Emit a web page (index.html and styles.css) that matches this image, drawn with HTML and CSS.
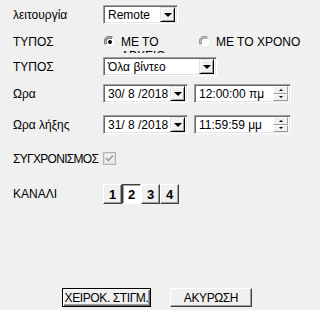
FILE: index.html
```html
<!DOCTYPE html>
<html>
<head>
<meta charset="utf-8">
<link rel="stylesheet" href="styles.css">
</head>
<body>
<div class="dlg">
  <div class="row r1">
    <div class="lbl">λειτουργία</div>
    <div class="field combo c-remote"><span class="val">Remote</span><span class="dd"><i class="tri"></i></span></div>
  </div>
  <div class="row r2">
    <div class="lbl">ΤΥΠΟΣ</div>
    <div class="radios">
      <div class="radio on"><svg width="12" height="12" viewBox="0 0 12 12"><circle cx="6" cy="6" r="5.5" fill="#fff" stroke="#e3e3e3"/><path d="M1.5 8.5 A5 5 0 0 1 8.5 1.5" fill="none" stroke="#7a7a7a" stroke-width="1.2"/><path d="M2.5 8 A4 4 0 0 1 8 2.5" fill="none" stroke="#404040" stroke-width="1"/><circle cx="6" cy="6" r="2" fill="#000"/></svg></div>
      <div class="rtext clip">ΜΕ ΤΟ ΑΡΧΕΙΟ</div>
      <div class="radio off"><svg width="12" height="12" viewBox="0 0 12 12"><circle cx="6" cy="6" r="5.5" fill="#fff" stroke="#e3e3e3"/><path d="M1.5 8.5 A5 5 0 0 1 8.5 1.5" fill="none" stroke="#9a9a9a" stroke-width="1.2"/><path d="M2.5 8 A4 4 0 0 1 8 2.5" fill="none" stroke="#6a6a6a" stroke-width="1"/></svg></div>
      <div class="rtext">ΜΕ ΤΟ ΧΡΟΝΟ</div>
    </div>
  </div>
  <div class="row r3">
    <div class="lbl">ΤΥΠΟΣ</div>
    <div class="field combo c-type"><span class="val">Όλα βίντεο</span><span class="dd"><i class="tri"></i></span></div>
  </div>
  <div class="row r4">
    <div class="lbl">Ωρα</div>
    <div class="field combo c-date"><span class="val">30/ 8 /2018</span><span class="dd"><i class="tri"></i></span></div>
    <div class="field spinbox"><span class="val">12:00:00 πμ</span><span class="spin"><span class="sb"><i class="up"></i></span><span class="sb"><i class="dn"></i></span></span></div>
  </div>
  <div class="row r5">
    <div class="lbl">Ωρα λήξης</div>
    <div class="field combo c-date"><span class="val">31/ 8 /2018</span><span class="dd"><i class="tri"></i></span></div>
    <div class="field spinbox"><span class="val">11:59:59 μμ</span><span class="spin"><span class="sb"><i class="up"></i></span><span class="sb"><i class="dn"></i></span></span></div>
  </div>
  <div class="row r6">
    <div class="lbl tight">ΣΥΓΧΡΟΝΙΣΜΟΣ</div>
    <div class="check"><svg width="13" height="13" viewBox="0 0 13 13"><rect x="0.5" y="0.5" width="12" height="12" fill="#f4f4f4" stroke="#b4b4b4"/><rect x="1.5" y="1.5" width="10" height="10" fill="#f0f0f0" stroke="#dcdcdc"/><path d="M3 6 L5.3 8.5 L10 3.5" fill="none" stroke="#9a9a9a" stroke-width="1.6"/></svg></div>
  </div>
  <div class="row r7">
    <div class="lbl">ΚΑΝΑΛΙ</div>
    <div class="chans">
      <div class="chb">1</div>
      <div class="chb pressed">2</div>
      <div class="chb">3</div>
      <div class="chb">4</div>
    </div>
  </div>
  <div class="btns">
    <div class="btn def">ΧΕΙΡΟΚ. ΣΤΙΓΜ.</div>
    <div class="btn cancel">ΑΚΥΡΩΣΗ</div>
  </div>
</div>
</body>
</html>
```
FILE: styles.css
```css
html, body {
  margin: 0;
  padding: 0;
  background: #f0f0f0;
}
body {
  width: 316px;
  height: 310px;
  overflow: hidden;
  font-family: "Liberation Sans Narrow", "Liberation Sans", Arial, sans-serif;
  font-size: 12px;
  color: #000;
}
.dlg {
  display: flex;
  flex-direction: column;
  padding: 5px 0 0 13px;
}
.row {
  display: flex;
  align-items: center;
}
.lbl {
  width: 90px;
  flex: none;
  line-height: 14px;
  white-space: nowrap;
}
.lbl.tight { letter-spacing: -0.7px; }
.r1 { height: 19px; }
.r2 { margin-top: 11px; height: 22px; align-items: flex-start; }
.r3 { height: 19px; }
.r4 { margin-top: 8px; height: 19px; }
.r5 { margin-top: 12px; height: 19px; }
.r6 { margin-top: 18px; height: 13px; }
.r7 { margin-top: 19px; height: 20px; }

.field {
  box-sizing: border-box;
  height: 19px;
  background: #fff;
  border-top: 1px solid #a0a0a0;
  border-left: 1px solid #a0a0a0;
  border-bottom: 1px solid #fff;
  border-right: 1px solid #fff;
  box-shadow: inset 1px 1px 0 #696969, inset -1px -1px 0 #e3e3e3;
  display: flex;
  align-items: center;
  padding: 2px;
}
.val {
  flex: 1;
  padding-left: 2px;
  line-height: 14px;
  white-space: nowrap;
  overflow: hidden;
}
.c-remote { width: 75px; }
.c-type { width: 114px; }
.c-date { width: 85px; }
.spinbox { width: 97px; margin-left: 6px; }

.dd {
  box-sizing: border-box;
  width: 15px;
  height: 15px;
  background: #f0f0f0;
  border-top: 1px solid #e3e3e3;
  border-left: 1px solid #e3e3e3;
  border-bottom: 1px solid #000;
  border-right: 1px solid #000;
  box-shadow: inset 1px 1px 0 #fff, inset -1px -1px 0 #a0a0a0;
  display: flex;
  align-items: center;
  justify-content: center;
  flex: none;
}
.tri {
  width: 0;
  height: 0;
  border-left: 4px solid transparent;
  border-right: 4px solid transparent;
  border-top: 4px solid #000;
  margin-top: 1px;
}
.spin {
  display: flex;
  flex-direction: column;
  width: 15px;
  height: 15px;
  flex: none;
}
.sb {
  box-sizing: border-box;
  flex: 1;
  background: #f0f0f0;
  border-top: 1px solid #fff;
  border-left: 1px solid #fff;
  border-bottom: 1px solid #a0a0a0;
  border-right: 1px solid #a0a0a0;
  display: flex;
  align-items: center;
  justify-content: center;
}
.up {
  width: 0; height: 0;
  border-left: 2px solid transparent;
  border-right: 2px solid transparent;
  border-bottom: 2px solid #000;
}
.dn {
  width: 0; height: 0;
  border-left: 2px solid transparent;
  border-right: 2px solid transparent;
  border-top: 2px solid #000;
}

.radios {
  display: flex;
  align-items: flex-start;
}
.radio {
  margin: 1px 5px 0 1px;
  height: 12px;
}
.rtext {
  line-height: 14px;
  white-space: nowrap;
}
.rtext.clip {
  white-space: normal;
  width: 44px;
  height: 18px;
  overflow: hidden;
  margin-right: 34px;
}
.radio.off { margin-left: 0; }

.check {
  height: 13px;
}

.chans {
  display: flex;
}
.chb {
  box-sizing: border-box;
  width: 19px;
  height: 20px;
  background: #f0f0f0;
  border-top: 1px solid #fff;
  border-left: 1px solid #fff;
  border-bottom: 1px solid #404040;
  border-right: 1px solid #404040;
  box-shadow: inset -1px -1px 0 #a0a0a0;
  font-family: "Liberation Sans", Arial, sans-serif;
  font-weight: bold;
  font-size: 13px;
  display: flex;
  align-items: center;
  justify-content: center;
}
.chb.pressed {
  background: #fff;
  border-top: 1px solid #404040;
  border-left: 1px solid #404040;
  border-bottom: 1px solid #fff;
  border-right: 1px solid #fff;
  box-shadow: inset 1px 1px 0 #a0a0a0;
}

.btns {
  display: flex;
  margin-top: 84px;
  margin-left: 49px;
  gap: 19px;
}
.btn {
  box-sizing: border-box;
  height: 19px;
  background: #f0f0f0;
  border-top: 1px solid #fff;
  border-left: 1px solid #fff;
  border-bottom: 1px solid #404040;
  border-right: 1px solid #404040;
  box-shadow: inset -1px -1px 0 #a0a0a0;
  display: flex;
  align-items: center;
  justify-content: center;
  line-height: 14px;
  white-space: nowrap;
  letter-spacing: -0.4px;
}
.btn.def {
  width: 89px;
  border: 1px solid #000;
  box-shadow: inset 1px 1px 0 #fff, inset -1px -1px 0 #696969, inset -2px -2px 0 #a0a0a0;
}
.btn.cancel { width: 82px; }
```
